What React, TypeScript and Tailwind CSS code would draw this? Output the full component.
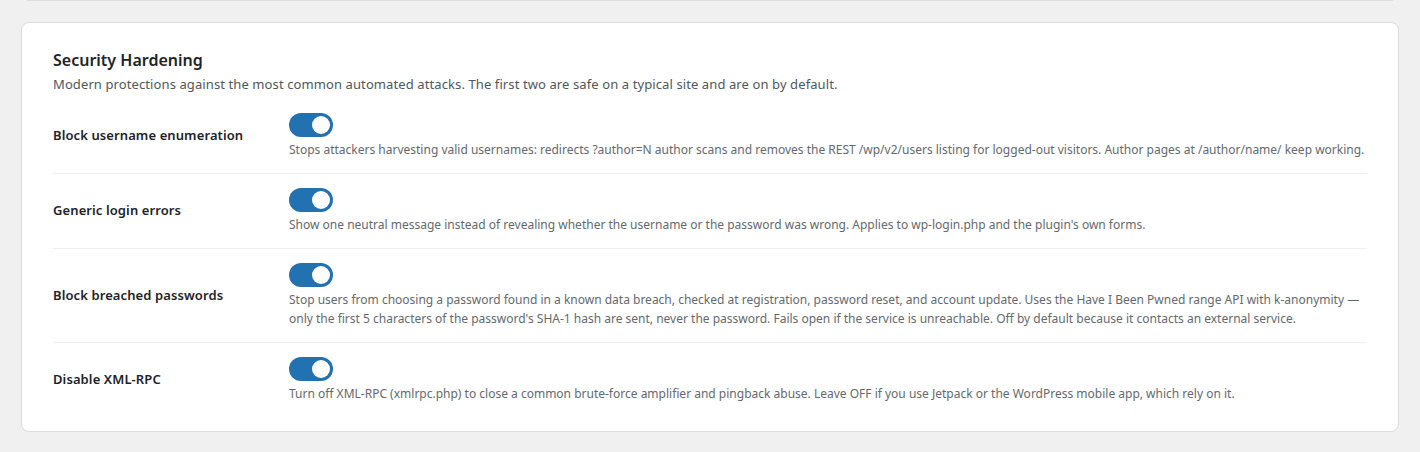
import React from "react";

const rows = [
  {
    label: "Block username enumeration",
    desc: [
      "Stops attackers harvesting valid usernames: redirects ?author=N author scans and removes the REST /wp/v2/users listing for logged-out visitors. Author pages at /author/name/ keep working.",
    ],
  },
  {
    label: "Generic login errors",
    desc: [
      "Show one neutral message instead of revealing whether the username or the password was wrong. Applies to wp-login.php and the plugin's own forms.",
    ],
  },
  {
    label: "Block breached passwords",
    desc: [
      "Stop users from choosing a password found in a known data breach, checked at registration, password reset, and account update. Uses the Have I Been Pwned range API with k-anonymity \u2014",
      "only the first 5 characters of the password's SHA-1 hash are sent, never the password. Fails open if the service is unreachable. Off by default because it contacts an external service.",
    ],
  },
  {
    label: "Disable XML-RPC",
    desc: [
      "Turn off XML-RPC (xmlrpc.php) to close a common brute-force amplifier and pingback abuse. Leave OFF if you use Jetpack or the WordPress mobile app, which rely on it.",
    ],
  },
];

function Toggle() {
  return (
    <div className="w-[44px] h-[24px] rounded-full bg-[#2271b1] flex items-center justify-end pr-[3px]">
      <div className="w-[18px] h-[18px] rounded-full bg-white" />
    </div>
  );
}

export default function App() {
  return (
    <div
      className="w-[1420px] h-[452px] bg-[#f0f0f1] px-[21px] overflow-hidden"
      style={{ fontFamily: '"Noto Sans", sans-serif' }}
    >
      <div className="h-[1px] mx-[6px] bg-[#dcdcde]" />
      <div className="mt-[21px] bg-white border border-[#dcdcde] rounded-[8px] px-[31px] pt-[26px] pb-[14px]">
        <h2 className="text-[16px] leading-[22px] font-semibold text-[#1d2327]">
          Security Hardening
        </h2>
        <p className="mt-[3px] text-[13px] leading-[20px] text-[#50575e] tracking-[0.1px]">
          Modern protections against the most common automated attacks. The first two are safe on a typical site and are on by default.
        </p>
        <div className="mt-[5px]">
          {rows.map((r, i) => (
            <div
              key={r.label}
              className={`flex items-center py-[14px] ${i < rows.length - 1 ? "border-b border-[#f0f0f1]" : ""}`}
            >
              <div className="w-[236px] shrink-0 text-[13px] font-semibold text-[#1d2327] tracking-[0.1px]">
                {r.label}
              </div>
              <div className="flex-1">
                <Toggle />
                <div className="mt-[3px] text-[12px] leading-[19px] text-[#646970]">
                  {r.desc.map((d) => (
                    <div key={d}>{d}</div>
                  ))}
                </div>
              </div>
            </div>
          ))}
        </div>
      </div>
    </div>
  );
}
